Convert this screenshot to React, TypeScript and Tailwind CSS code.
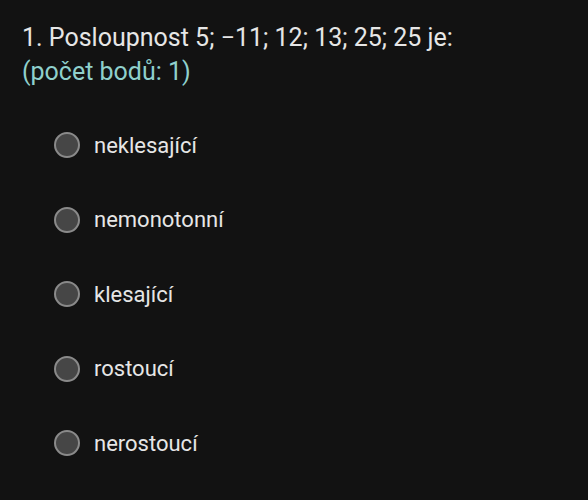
import React from "react";

const options = ["neklesající", "nemonotonní", "klesající", "rostoucí", "nerostoucí"];

export default function App() {
  return (
    <div className="w-[588px] h-[500px] bg-[#121212] overflow-hidden" style={{ fontFamily: "Roboto, 'Noto Sans', sans-serif" }}>
      <div className="pl-[22px] pt-[21px]">
        <div className="text-[25px] leading-[34px] text-[#e6e6e6]">1. Posloupnost 5; −11; 12; 13; 25; 25 je:</div>
        <div className="text-[25px] leading-[34px] text-[#8fd0cc]">(počet bodů: 1)</div>
      </div>
      <div className="flex flex-col gap-[48.5px] pl-[54px] pt-[43px]">
        {options.map((o) => (
          <div key={o} className="flex items-center h-[26px]">
            <div className="w-[26px] h-[26px] rounded-full bg-[#464646] border-2 border-[#8a8a8a]" />
            <span className="ml-[14px] text-[22px] text-[#e6e6e6]">{o}</span>
          </div>
        ))}
      </div>
    </div>
  );
}
